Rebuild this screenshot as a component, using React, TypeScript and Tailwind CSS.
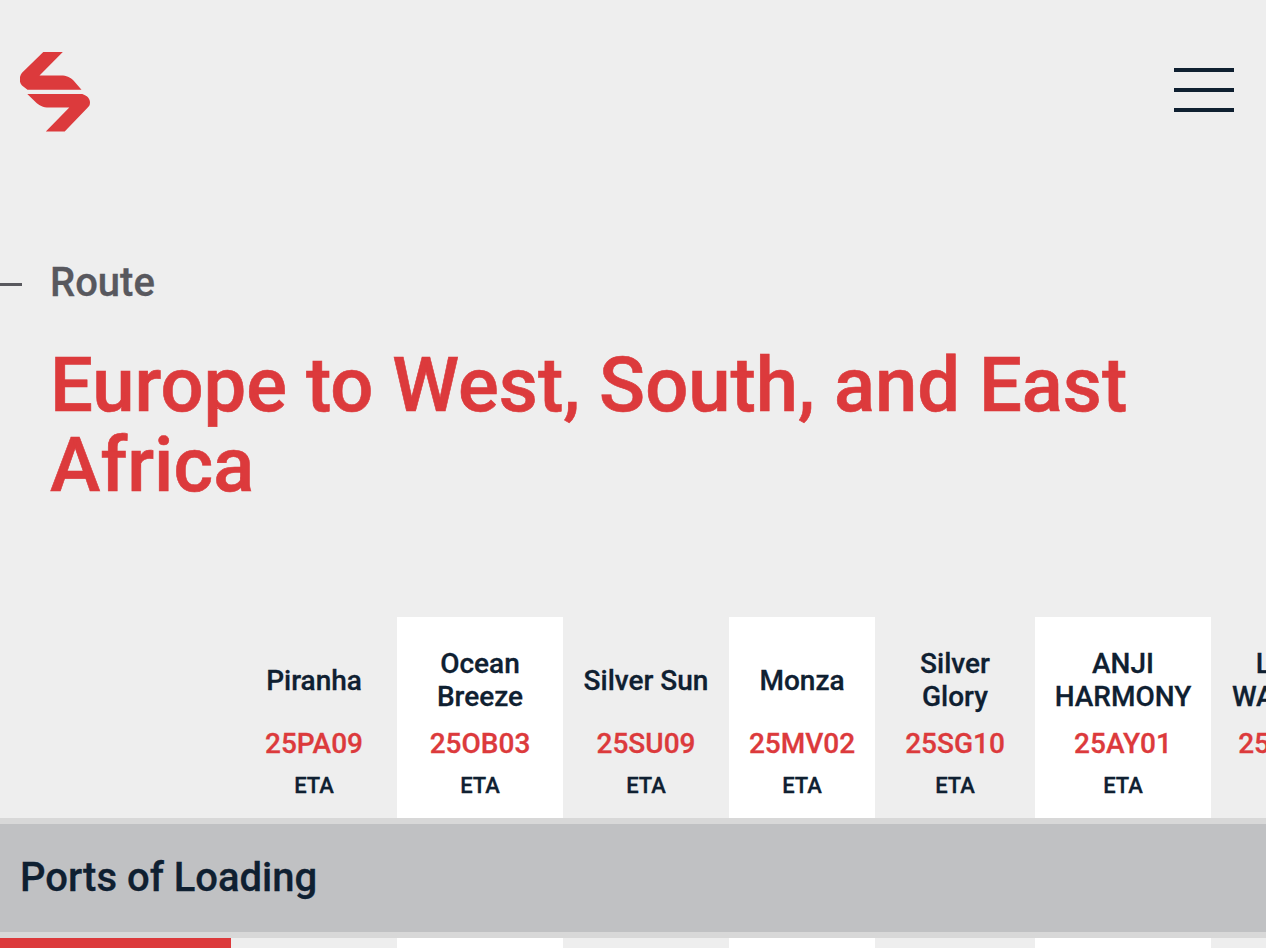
const vessels = [
  { name: ['Piranha'], code: '25PA09', w: 'w-[166px]', white: false },
  { name: ['Ocean', 'Breeze'], code: '25OB03', w: 'w-[166px]', white: true },
  { name: ['Silver Sun'], code: '25SU09', w: 'w-[166px]', white: false },
  { name: ['Monza'], code: '25MV02', w: 'w-[146px]', white: true },
  { name: ['Silver', 'Glory'], code: '25SG10', w: 'w-[160px]', white: false },
  { name: ['ANJI', 'HARMONY'], code: '25AY01', w: 'w-[176px]', white: true },
  { name: ['LIMA', 'WANDER'], code: '25LW04', w: 'w-[156px]', white: false },
];

function Logo() {
  return (
    <svg width="72" height="80" viewBox="1 0 72 80" fill="#dc3a3c">
      <path d="M24.300 0H43.800L20.500 23.500H42C47.500 23.500 51 25 54.500 28.500L62.500 37.800H8.500L3 33.500C0 30.500 0 24.500 3 20.800Z" />
      <path d="M8.300 42H63.300C68 43.500 71 46.500 71 50.500C71 53 70 54.500 68.300 56L45.700 79.500H26.800L50.300 55.500H30C24 55.500 20 53.500 16.500 50Z" />
    </svg>
  );
}

export default function App() {
  return (
    <div className="h-[948px] w-[1266px] overflow-hidden bg-[#eeeeee] font-['Roboto',sans-serif] text-[#0f2031] [-webkit-text-stroke:0.3px]">
      <header className="flex h-[184px] items-start justify-between pl-5 pr-8 pt-[52px]">
        <Logo />
        <div className="mt-4 flex w-[60px] flex-col gap-4">
          <span className="h-1 bg-[#0f2031]" />
          <span className="h-1 bg-[#0f2031]" />
          <span className="h-1 bg-[#0f2031]" />
        </div>
      </header>

      <section className="h-[433px] pt-[76px]">
        <div className="flex items-center gap-[28px]">
          <span className="mt-[3px] h-[3px] w-[22px] bg-[#58585e]" />
          <span className="text-[40px] font-medium leading-[46px] text-[#58585e]">Route</span>
        </div>
        <h1 className="mt-[39px] w-[1140px] pl-[50px] text-[76px] font-medium leading-[80px] text-[#dc3a3c] [-webkit-text-stroke:0.6px]">
          Europe to West, South, and East Africa
        </h1>
      </section>

      <div className="flex h-[201px]">
        <div className="w-[231px] shrink-0" />
        {vessels.map((v) => (
          <div
            key={v.code}
            className={`flex shrink-0 flex-col items-center justify-end pb-[18px] ${v.w} ${v.white ? 'bg-white' : ''}`}
          >
            <div className="flex h-[66px] translate-y-px flex-col justify-center text-center text-[28px] font-medium leading-[33px]">
              {v.name.map((line) => (
                <div key={line}>{line}</div>
              ))}
            </div>
            <div className="mt-[15px] text-[28px] font-medium leading-[33px] text-[#dc3a3c]">{v.code}</div>
            <div className="mt-[12px] text-[22px] font-medium leading-[28px]">ETA</div>
          </div>
        ))}
      </div>

      <div className="h-[120px] border-y-[6px] border-[#d8d8d8] bg-[#c0c1c3] py-[25px] pl-5">
        <h2 className="text-[40px] font-medium leading-[58px]">Ports of Loading</h2>
      </div>

      <div className="flex h-[10px]">
        <div className="w-[231px] shrink-0 bg-[#dc3a3c]" />
        {vessels.map((v) => (
          <div key={v.code} className={`shrink-0 ${v.w} ${v.white ? 'bg-white' : ''}`} />
        ))}
      </div>
    </div>
  );
}
